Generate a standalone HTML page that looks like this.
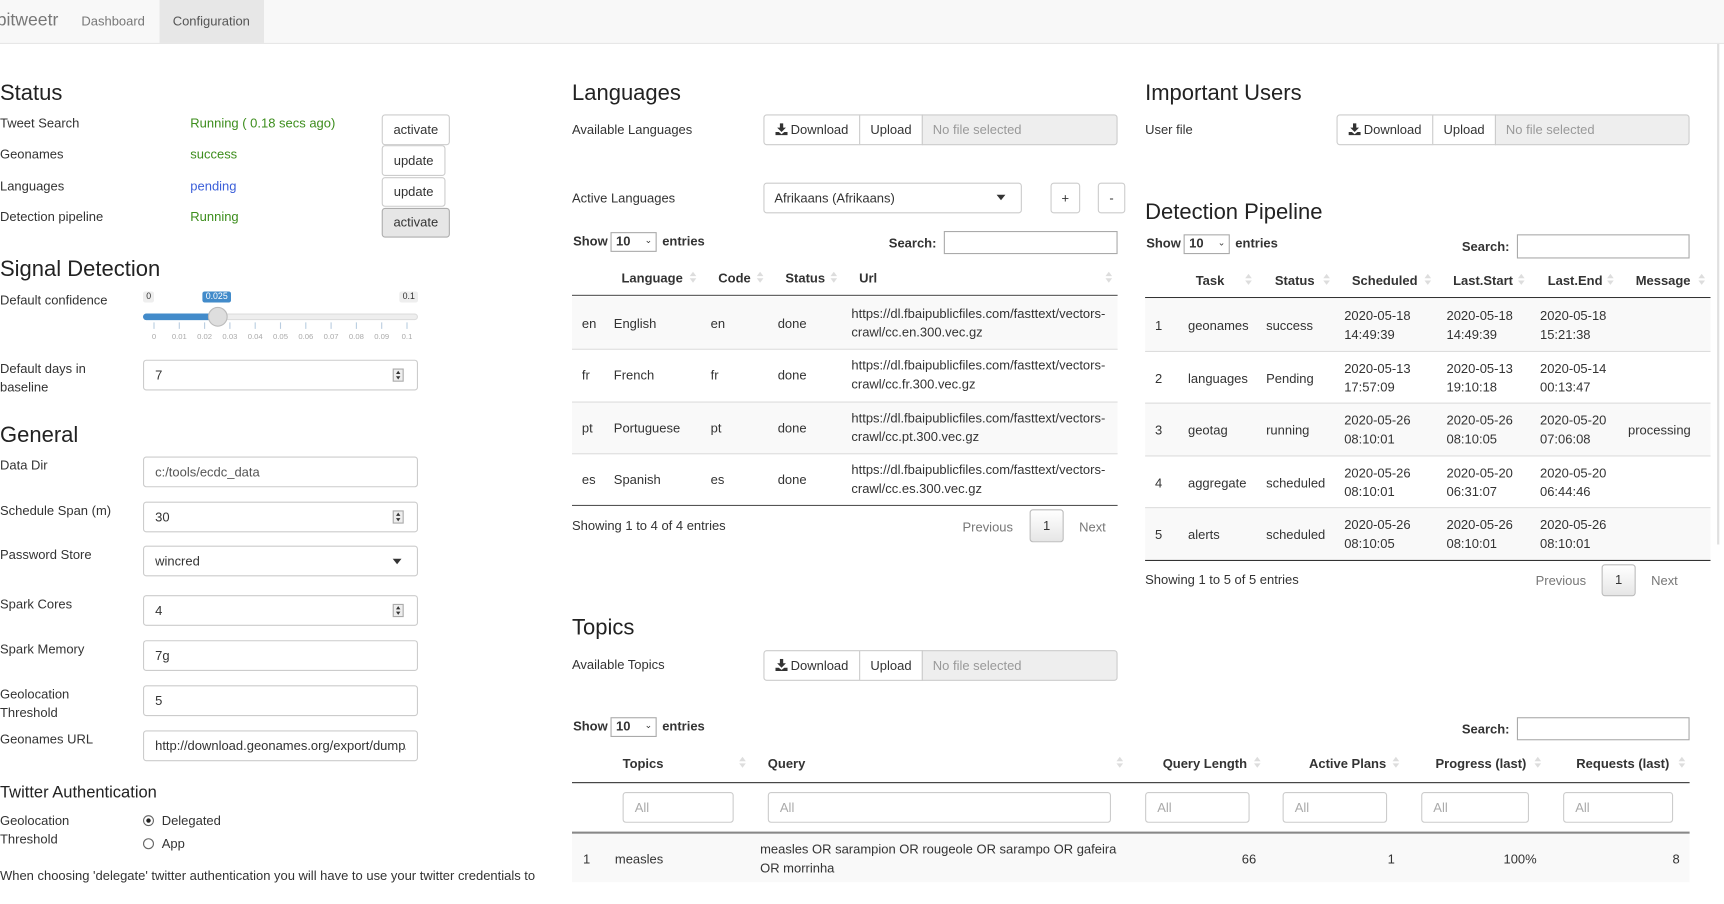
<!DOCTYPE html>
<html><head><meta charset="utf-8">
<style>
html,body{margin:0;padding:0;background:#fff;overflow:hidden;width:1724px;height:904px}
#w{position:absolute;left:0;top:0;width:1568px;height:822px;transform:scale(1.1);transform-origin:0 0;font-family:"Liberation Sans",Arial,sans-serif;font-size:11.8px;color:#333}
.a{position:absolute;white-space:nowrap;line-height:16px}
.h{font-size:20px;line-height:24px;color:#222}
.b{font-weight:bold}
.box{position:absolute;box-sizing:border-box;border:1px solid #ccc;border-radius:3px;background:#fff}
.btn{position:absolute;box-sizing:border-box;border:1px solid #ccc;border-radius:3px;background:#fff;text-align:center;font-size:11.8px;color:#333}
.g{color:#3c8d1c}
.bl{color:#3b5fd9}
.st{position:absolute;background:#f9f9f9}
.ln{position:absolute;height:1px;background:#ddd}
.dk{position:absolute;height:2px;background:#333}
.gr{color:#777}
.spin{position:absolute;width:10px;height:12px;border:1px solid #aaa;background:#eee;box-sizing:border-box}
.spin:before{content:"";position:absolute;left:2px;top:1px;border-left:2px solid transparent;border-right:2px solid transparent;border-bottom:3px solid #333}
.spin:after{content:"";position:absolute;left:2px;top:6px;border-left:2px solid transparent;border-right:2px solid transparent;border-top:3px solid #333}
.caret{position:absolute;width:0;height:0;border-left:4px solid transparent;border-right:4px solid transparent;border-top:5px solid #333}
.sa{position:absolute;width:6px;height:12px}
.sa:before{content:"";position:absolute;left:0;top:0;border-left:3px solid transparent;border-right:3px solid transparent;border-bottom:4px solid #ddd}
.sa:after{content:"";position:absolute;left:0;top:6px;border-left:3px solid transparent;border-right:3px solid transparent;border-top:4px solid #ddd}
.dl{display:inline-block;vertical-align:-1px;margin-right:3px}
.fi{position:absolute;box-sizing:border-box;border:1px solid #ccc;border-radius:3px;background:#fff}
</style></head><body><div id="w">

<div style="position:absolute;left:0;top:0;width:1568px;height:39px;background:#f8f8f8;border-bottom:1px solid #e7e7e7"></div>
<div style="position:absolute;left:145px;top:0;width:95px;height:39px;background:#e7e7e7"></div>
<div class="a" style="left:-3px;top:10px;font-size:16px;line-height:18px;color:#777">bitweetr</div>
<div class="a" style="left:74px;top:11px;color:#777">Dashboard</div>
<div class="a" style="left:157px;top:11px;color:#555">Configuration</div>
<div style="position:absolute;left:1561px;top:40px;width:2px;height:455px;background:#e0e0e0"></div>

<div class="a h" style="left:0;top:73px">Status</div>
<div class="a" style="left:0;top:104px">Tweet Search</div>
<div class="a g" style="left:173px;top:104px">Running ( 0.18 secs ago)</div>
<div class="a" style="left:0;top:132px">Geonames</div>
<div class="a g" style="left:173px;top:132px">success</div>
<div class="a" style="left:0;top:161px">Languages</div>
<div class="a bl" style="left:173px;top:161px">pending</div>
<div class="a" style="left:0;top:189px">Detection pipeline</div>
<div class="a g" style="left:173px;top:189px">Running</div>
<div class="btn" style="left:347px;top:104px;width:62px;height:28px;line-height:26px">activate</div>
<div class="btn" style="left:347px;top:132px;width:58px;height:28px;line-height:26px">update</div>
<div class="btn" style="left:347px;top:161px;width:58px;height:27px;line-height:25px">update</div>
<div class="btn" style="left:347px;top:189px;width:62px;height:27px;line-height:25px;background:#e6e6e6;border-color:#adadad">activate</div>

<div class="a h" style="left:0;top:233px">Signal Detection</div>
<div class="a" style="left:0;top:265px">Default confidence</div>
<div class="a" style="left:130px;top:265px;font-size:8px;line-height:10px;background:#eee;padding:0 3px;border-radius:2px">0</div>
<div class="a" style="left:184px;top:265px;font-size:8px;line-height:10px;background:#428bca;color:#fff;padding:0 3px;border-radius:2px">0.025</div>
<div class="a" style="left:363px;top:265px;font-size:8px;line-height:10px;background:#eee;padding:0 3px;border-radius:2px">0.1</div>
<div style="position:absolute;left:130px;top:285px;width:250px;height:6px;border-radius:3px;background:#eee;border:1px solid #ddd;box-sizing:border-box"></div>
<div style="position:absolute;left:130px;top:285px;width:68px;height:6px;border-radius:3px;background:#428bca"></div>
<div style="position:absolute;left:189px;top:279px;width:18px;height:18px;border-radius:50%;background:#dedede;border:1px solid #bbb;box-sizing:border-box"></div>
<svg style="position:absolute;left:130px;top:293px" width="252" height="20"><g stroke="#b9cde0" stroke-width="1">
<line x1="10" y1="0" x2="10" y2="6"/><line x1="33" y1="0" x2="33" y2="6"/><line x1="56" y1="0" x2="56" y2="6"/><line x1="79" y1="0" x2="79" y2="6"/><line x1="102" y1="0" x2="102" y2="6"/><line x1="125" y1="0" x2="125" y2="6"/><line x1="148" y1="0" x2="148" y2="6"/><line x1="171" y1="0" x2="171" y2="6"/><line x1="194" y1="0" x2="194" y2="6"/><line x1="217" y1="0" x2="217" y2="6"/><line x1="240" y1="0" x2="240" y2="6"/></g>
<g fill="#aaa" font-size="7" font-family="Liberation Sans" text-anchor="middle"><text x="10" y="15">0</text><text x="33" y="15">0.01</text><text x="56" y="15">0.02</text><text x="79" y="15">0.03</text><text x="102" y="15">0.04</text><text x="125" y="15">0.05</text><text x="148" y="15">0.06</text><text x="171" y="15">0.07</text><text x="194" y="15">0.08</text><text x="217" y="15">0.09</text><text x="240" y="15">0.1</text></g></svg>
<div class="a" style="left:0;top:327px">Default days in</div>
<div class="a" style="left:0;top:344px">baseline</div>
<div class="fi" style="left:130px;top:327px;width:250px;height:28px"></div>
<div class="a" style="left:141px;top:333px">7</div><div class="spin" style="left:357px;top:335px"></div>

<div class="a h" style="left:0;top:384px">General</div>
<div class="a" style="left:0;top:415px">Data Dir</div>
<div class="fi" style="left:130px;top:415px;width:250px;height:28px"></div><div class="a" style="left:141px;top:421px;color:#555">c:/tools/ecdc_data</div>
<div class="a" style="left:0;top:456px">Schedule Span (m)</div>
<div class="fi" style="left:130px;top:456px;width:250px;height:28px"></div><div class="a" style="left:141px;top:462px">30</div><div class="spin" style="left:357px;top:464px"></div>
<div class="a" style="left:0;top:496px">Password Store</div>
<div class="fi" style="left:130px;top:496px;width:250px;height:28px"></div><div class="a" style="left:141px;top:502px">wincred</div><div class="caret" style="left:357px;top:508px"></div>
<div class="a" style="left:0;top:541px">Spark Cores</div>
<div class="fi" style="left:130px;top:541px;width:250px;height:28px"></div><div class="a" style="left:141px;top:547px">4</div><div class="spin" style="left:357px;top:549px"></div>
<div class="a" style="left:0;top:582px">Spark Memory</div>
<div class="fi" style="left:130px;top:582px;width:250px;height:28px"></div><div class="a" style="left:141px;top:588px">7g</div>
<div class="a" style="left:0;top:623px">Geolocation</div><div class="a" style="left:0;top:640px">Threshold</div>
<div class="fi" style="left:130px;top:623px;width:250px;height:28px"></div><div class="a" style="left:141px;top:629px">5</div>
<div class="a" style="left:0;top:664px">Geonames URL</div>
<div class="fi" style="left:130px;top:664px;width:250px;height:28px"></div><div class="a" style="left:141px;top:670px;width:228px;overflow:hidden">http://download.geonames.org/export/dump/</div>

<div class="a" style="left:0;top:711px;font-size:15px;line-height:20px;color:#222">Twitter Authentication</div>
<div class="a" style="left:0;top:738px">Geolocation</div><div class="a" style="left:0;top:755px">Threshold</div>
<div style="position:absolute;left:130px;top:741px;width:10px;height:10px;border:1px solid #666;border-radius:50%;box-sizing:border-box"></div>
<div style="position:absolute;left:133px;top:744px;width:4px;height:4px;background:#222;border-radius:50%"></div>
<div class="a" style="left:147px;top:738px">Delegated</div>
<div style="position:absolute;left:130px;top:762px;width:10px;height:10px;border:1px solid #666;border-radius:50%;box-sizing:border-box"></div>
<div class="a" style="left:147px;top:759px">App</div>
<div class="a" style="left:0;top:788px">When choosing 'delegate' twitter authentication you will have to use your twitter credentials to</div>

<div class="a h" style="left:520px;top:73px">Languages</div>
<div class="a" style="left:520px;top:110px">Available Languages</div>
<div class="btn" style="left:694px;top:104px;width:88px;height:28px;line-height:26px;border-radius:3px 0 0 3px"><svg class="dl" width="11" height="11" viewBox="0 0 11 11"><path d="M4 0h3v4h2.5L5.5 8 1.5 4H4z" fill="#333"/><path d="M0 8h3l2.5 2 2.5-2h3v3H0z" fill="#333"/></svg>Download</div>
<div class="btn" style="left:781px;top:104px;width:58px;height:28px;line-height:26px;border-radius:0">Upload</div>
<div class="box" style="left:838px;top:104px;width:178px;height:28px;background:#eee;border-radius:0 3px 3px 0"></div>
<div class="a" style="left:848px;top:110px;color:#999">No file selected</div>

<div class="a" style="left:520px;top:172px">Active Languages</div>
<div class="fi" style="left:694px;top:166px;width:235px;height:28px"></div>
<div class="a" style="left:704px;top:172px">Afrikaans (Afrikaans)</div><div class="caret" style="left:906px;top:177px"></div>
<div class="btn" style="left:955px;top:166px;width:27px;height:28px;line-height:26px">+</div>
<div class="btn" style="left:998px;top:166px;width:25px;height:28px;line-height:26px">-</div>

<div class="a b" style="left:521px;top:211px">Show</div>
<div class="fi" style="left:555px;top:211px;width:42px;height:18px;border-color:#aaa;border-radius:0"></div><div class="a b" style="left:560px;top:211px">10</div><div class="a" style="left:586px;top:211px;font-size:8px">&#8964;</div>
<div class="a b" style="left:602px;top:211px">entries</div>
<div class="a b" style="left:808px;top:213px">Search:</div>
<div class="fi" style="left:858px;top:210px;width:158px;height:21px;border-color:#aaa;border-radius:0"></div>

<div class="a b" style="left:565px;top:245px">Language</div><div class="sa" style="left:627px;top:247px"></div>
<div class="a b" style="left:653px;top:245px">Code</div><div class="sa" style="left:688px;top:247px"></div>
<div class="a b" style="left:714px;top:245px">Status</div><div class="sa" style="left:755px;top:247px"></div>
<div class="a b" style="left:781px;top:245px">Url</div><div class="sa" style="left:1005px;top:247px"></div>
<div class="dk" style="left:520px;top:268px;width:496px;height:1px;background:#555"></div>
<div class="st" style="left:520px;top:270px;width:496px;height:47px"></div>
<div class="st" style="left:520px;top:366px;width:496px;height:46px"></div>
<div class="ln" style="left:520px;top:317px;width:496px"></div>
<div class="ln" style="left:520px;top:365px;width:496px"></div>
<div class="ln" style="left:520px;top:412px;width:496px"></div>
<div class="dk" style="left:520px;top:459px;width:496px;height:1px;background:#555"></div>

<div class="a" style="left:529px;top:286px">en</div><div class="a" style="left:558px;top:286px">English</div><div class="a" style="left:646px;top:286px">en</div><div class="a" style="left:707px;top:286px">done</div>
<div class="a" style="left:774px;top:277px;line-height:17px">https://dl.fbaipublicfiles.com/fasttext/vectors-<br>crawl/cc.en.300.vec.gz</div>
<div class="a" style="left:529px;top:333px">fr</div><div class="a" style="left:558px;top:333px">French</div><div class="a" style="left:646px;top:333px">fr</div><div class="a" style="left:707px;top:333px">done</div>
<div class="a" style="left:774px;top:324px;line-height:17px">https://dl.fbaipublicfiles.com/fasttext/vectors-<br>crawl/cc.fr.300.vec.gz</div>
<div class="a" style="left:529px;top:381px">pt</div><div class="a" style="left:558px;top:381px">Portuguese</div><div class="a" style="left:646px;top:381px">pt</div><div class="a" style="left:707px;top:381px">done</div>
<div class="a" style="left:774px;top:372px;line-height:17px">https://dl.fbaipublicfiles.com/fasttext/vectors-<br>crawl/cc.pt.300.vec.gz</div>
<div class="a" style="left:529px;top:428px">es</div><div class="a" style="left:558px;top:428px">Spanish</div><div class="a" style="left:646px;top:428px">es</div><div class="a" style="left:707px;top:428px">done</div>
<div class="a" style="left:774px;top:419px;line-height:17px">https://dl.fbaipublicfiles.com/fasttext/vectors-<br>crawl/cc.es.300.vec.gz</div>

<div class="a" style="left:520px;top:470px">Showing 1 to 4 of 4 entries</div>
<div class="a gr" style="left:875px;top:471px">Previous</div>
<div class="btn" style="left:936px;top:463px;width:31px;height:30px;line-height:28px;background:linear-gradient(#fff,#e6e6e6);border-color:#bbb">1</div>
<div class="a gr" style="left:981px;top:471px">Next</div>

<div class="a h" style="left:520px;top:559px">Topics</div>
<div class="a" style="left:520px;top:596px">Available Topics</div>
<div class="btn" style="left:694px;top:591px;width:88px;height:28px;line-height:26px;border-radius:3px 0 0 3px"><svg class="dl" width="11" height="11" viewBox="0 0 11 11"><path d="M4 0h3v4h2.5L5.5 8 1.5 4H4z" fill="#333"/><path d="M0 8h3l2.5 2 2.5-2h3v3H0z" fill="#333"/></svg>Download</div>
<div class="btn" style="left:781px;top:591px;width:58px;height:28px;line-height:26px;border-radius:0">Upload</div>
<div class="box" style="left:838px;top:591px;width:178px;height:28px;background:#eee;border-radius:0 3px 3px 0"></div>
<div class="a" style="left:848px;top:597px;color:#999">No file selected</div>

<div class="a b" style="left:521px;top:652px">Show</div>
<div class="fi" style="left:555px;top:652px;width:42px;height:18px;border-color:#aaa;border-radius:0"></div><div class="a b" style="left:560px;top:652px">10</div><div class="a" style="left:586px;top:652px;font-size:8px">&#8964;</div>
<div class="a b" style="left:602px;top:652px">entries</div>
<div class="a b" style="left:1329px;top:655px">Search:</div>
<div class="fi" style="left:1379px;top:652px;width:157px;height:21px;border-color:#aaa;border-radius:0"></div>

<div class="a b" style="left:566px;top:686px">Topics</div><div class="sa" style="left:672px;top:688px"></div>
<div class="a b" style="left:698px;top:686px">Query</div><div class="sa" style="left:1015px;top:688px"></div>
<div class="a b" style="left:1057px;top:686px">Query Length</div><div class="sa" style="left:1140px;top:688px"></div>
<div class="a b" style="left:1190px;top:686px">Active Plans</div><div class="sa" style="left:1266px;top:688px"></div>
<div class="a b" style="left:1305px;top:686px">Progress (last)</div><div class="sa" style="left:1395px;top:688px"></div>
<div class="a b" style="left:1433px;top:686px">Requests (last)</div><div class="sa" style="left:1526px;top:688px"></div>
<div class="dk" style="left:520px;top:711px;width:1016px;height:1px;background:#333"></div>
<div class="fi" style="left:566px;top:720px;width:101px;height:28px"></div><div class="a" style="left:577px;top:726px;color:#aaa">All</div>
<div class="fi" style="left:698px;top:720px;width:312px;height:28px"></div><div class="a" style="left:709px;top:726px;color:#aaa">All</div>
<div class="fi" style="left:1041px;top:720px;width:95px;height:28px"></div><div class="a" style="left:1052px;top:726px;color:#aaa">All</div>
<div class="fi" style="left:1166px;top:720px;width:95px;height:28px"></div><div class="a" style="left:1177px;top:726px;color:#aaa">All</div>
<div class="fi" style="left:1292px;top:720px;width:98px;height:28px"></div><div class="a" style="left:1303px;top:726px;color:#aaa">All</div>
<div class="fi" style="left:1421px;top:720px;width:100px;height:28px"></div><div class="a" style="left:1432px;top:726px;color:#aaa">All</div>
<div class="dk" style="left:520px;top:756px;width:1016px;height:2px;background:#888"></div>
<div class="st" style="left:520px;top:758px;width:1016px;height:44px"></div>
<div class="a" style="left:530px;top:773px">1</div>
<div class="a" style="left:559px;top:773px">measles</div>
<div class="a" style="left:691px;top:764px;line-height:17px">measles OR sarampion OR rougeole OR sarampo OR gafeira<br>OR morrinha</div>
<div class="a" style="left:1100px;top:773px;width:42px;text-align:right">66</div>
<div class="a" style="left:1230px;top:773px;width:38px;text-align:right">1</div>
<div class="a" style="left:1350px;top:773px;width:47px;text-align:right">100%</div>
<div class="a" style="left:1500px;top:773px;width:27px;text-align:right">8</div>

<div class="a h" style="left:1041px;top:73px">Important Users</div>
<div class="a" style="left:1041px;top:110px">User file</div>
<div class="btn" style="left:1215px;top:104px;width:88px;height:28px;line-height:26px;border-radius:3px 0 0 3px"><svg class="dl" width="11" height="11" viewBox="0 0 11 11"><path d="M4 0h3v4h2.5L5.5 8 1.5 4H4z" fill="#333"/><path d="M0 8h3l2.5 2 2.5-2h3v3H0z" fill="#333"/></svg>Download</div>
<div class="btn" style="left:1302px;top:104px;width:58px;height:28px;line-height:26px;border-radius:0">Upload</div>
<div class="box" style="left:1359px;top:104px;width:177px;height:28px;background:#eee;border-radius:0 3px 3px 0"></div>
<div class="a" style="left:1369px;top:110px;color:#999">No file selected</div>

<div class="a h" style="left:1041px;top:181px">Detection Pipeline</div>
<div class="a b" style="left:1042px;top:213px">Show</div>
<div class="fi" style="left:1076px;top:213px;width:42px;height:18px;border-color:#aaa;border-radius:0"></div><div class="a b" style="left:1081px;top:213px">10</div><div class="a" style="left:1107px;top:213px;font-size:8px">&#8964;</div>
<div class="a b" style="left:1123px;top:213px">entries</div>
<div class="a b" style="left:1329px;top:216px">Search:</div>
<div class="fi" style="left:1379px;top:213px;width:157px;height:22px;border-color:#aaa;border-radius:0"></div>

<div class="a b" style="left:1087px;top:247px">Task</div><div class="sa" style="left:1132px;top:249px"></div>
<div class="a b" style="left:1159px;top:247px">Status</div><div class="sa" style="left:1203px;top:249px"></div>
<div class="a b" style="left:1229px;top:247px">Scheduled</div><div class="sa" style="left:1295px;top:249px"></div>
<div class="a b" style="left:1321px;top:247px">Last.Start</div><div class="sa" style="left:1380px;top:249px"></div>
<div class="a b" style="left:1407px;top:247px">Last.End</div><div class="sa" style="left:1461px;top:249px"></div>
<div class="a b" style="left:1487px;top:247px">Message</div><div class="sa" style="left:1544px;top:249px"></div>
<div class="dk" style="left:1041px;top:270px;width:514px;height:1px;background:#333"></div>
<div class="st" style="left:1041px;top:271px;width:514px;height:48px"></div>
<div class="st" style="left:1041px;top:366px;width:514px;height:48px"></div>
<div class="st" style="left:1041px;top:462px;width:514px;height:48px"></div>
<div class="ln" style="left:1041px;top:319px;width:514px"></div>
<div class="ln" style="left:1041px;top:366px;width:514px"></div>
<div class="ln" style="left:1041px;top:414px;width:514px"></div>
<div class="ln" style="left:1041px;top:461px;width:514px"></div>
<div class="dk" style="left:1041px;top:509px;width:514px;height:1px;background:#333"></div>

<div class="a" style="left:1050px;top:288px">1</div><div class="a" style="left:1080px;top:288px">geonames</div><div class="a" style="left:1151px;top:288px">success</div>
<div class="a" style="left:1222px;top:279px;line-height:17px">2020-05-18<br>14:49:39</div><div class="a" style="left:1315px;top:279px;line-height:17px">2020-05-18<br>14:49:39</div><div class="a" style="left:1400px;top:279px;line-height:17px">2020-05-18<br>15:21:38</div>
<div class="a" style="left:1050px;top:336px">2</div><div class="a" style="left:1080px;top:336px">languages</div><div class="a" style="left:1151px;top:336px">Pending</div>
<div class="a" style="left:1222px;top:327px;line-height:17px">2020-05-13<br>17:57:09</div><div class="a" style="left:1315px;top:327px;line-height:17px">2020-05-13<br>19:10:18</div><div class="a" style="left:1400px;top:327px;line-height:17px">2020-05-14<br>00:13:47</div>
<div class="a" style="left:1050px;top:383px">3</div><div class="a" style="left:1080px;top:383px">geotag</div><div class="a" style="left:1151px;top:383px">running</div>
<div class="a" style="left:1222px;top:374px;line-height:17px">2020-05-26<br>08:10:01</div><div class="a" style="left:1315px;top:374px;line-height:17px">2020-05-26<br>08:10:05</div><div class="a" style="left:1400px;top:374px;line-height:17px">2020-05-20<br>07:06:08</div><div class="a" style="left:1480px;top:383px">processing</div>
<div class="a" style="left:1050px;top:431px">4</div><div class="a" style="left:1080px;top:431px">aggregate</div><div class="a" style="left:1151px;top:431px">scheduled</div>
<div class="a" style="left:1222px;top:422px;line-height:17px">2020-05-26<br>08:10:01</div><div class="a" style="left:1315px;top:422px;line-height:17px">2020-05-20<br>06:31:07</div><div class="a" style="left:1400px;top:422px;line-height:17px">2020-05-20<br>06:44:46</div>
<div class="a" style="left:1050px;top:478px">5</div><div class="a" style="left:1080px;top:478px">alerts</div><div class="a" style="left:1151px;top:478px">scheduled</div>
<div class="a" style="left:1222px;top:469px;line-height:17px">2020-05-26<br>08:10:05</div><div class="a" style="left:1315px;top:469px;line-height:17px">2020-05-26<br>08:10:01</div><div class="a" style="left:1400px;top:469px;line-height:17px">2020-05-26<br>08:10:01</div>

<div class="a" style="left:1041px;top:519px">Showing 1 to 5 of 5 entries</div>
<div class="a gr" style="left:1396px;top:520px">Previous</div>
<div class="btn" style="left:1456px;top:513px;width:31px;height:29px;line-height:27px;background:linear-gradient(#fff,#e6e6e6);border-color:#bbb">1</div>
<div class="a gr" style="left:1501px;top:520px">Next</div>

</div></body></html>
